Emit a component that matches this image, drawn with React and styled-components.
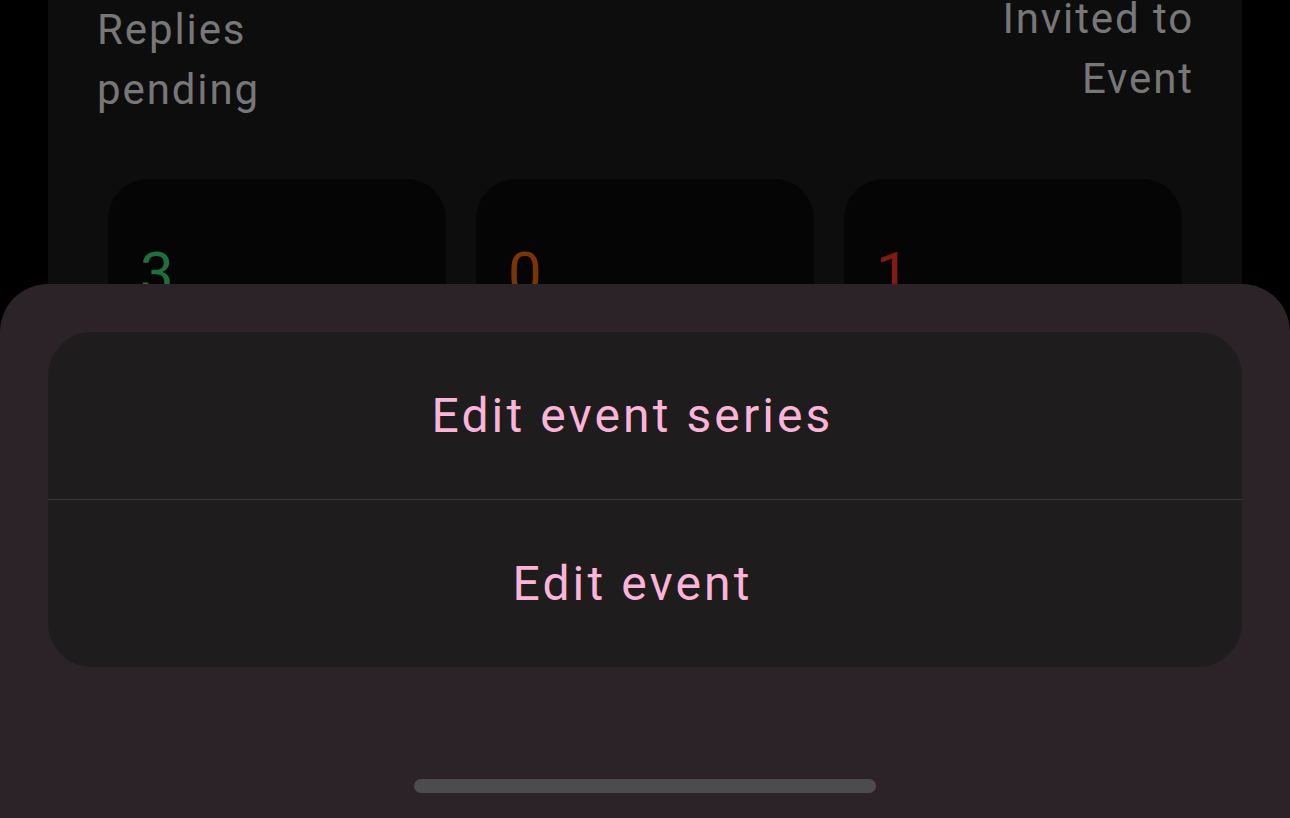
import React from 'react';
import styled, { createGlobalStyle } from 'styled-components';

// Global page reset
const GlobalStyle = createGlobalStyle`
  html, body {
    margin: 0;
    padding: 0;
    background: #000000;
    overflow: hidden;
  }
  body {
    font-family: Roboto, "Noto Sans", "Liberation Sans", sans-serif;
    -webkit-font-smoothing: antialiased;
  }
`;

const Screen = styled.div`
  position: relative;
  width: 1290px;
  height: 818px;
  overflow: hidden;
  background: #000000;
`;

const Panel = styled.section`
  margin: 0 48px;
  height: 818px;
  background: #0e0d0e;
  display: flex;
  flex-direction: column;
`;

const LabelRow = styled.div`
  display: flex;
  justify-content: space-between;
  align-items: flex-start;
  padding: 0 48px 0 49px;
`;

const StatLabel = styled.div`
  margin-top: ${p => p.shift || 0}px;
  font-size: 42px;
  line-height: 60px;
  letter-spacing: 1.9px;
  color: #787778;
  text-align: ${p => p.align || 'left'};
`;

const CardRow = styled.div`
  display: grid;
  grid-template-columns: repeat(3, 338px);
  gap: 30px;
  padding: 0 60px;
  margin-top: 59px;
`;

const Card = styled.div`
  height: 300px;
  border-radius: 40px;
  background: #050505;
  padding: 65px 32px 0;
  box-sizing: border-box;
`;

const Count = styled.div`
  font-size: 60px;
  line-height: 1;
  color: ${p => p.color};
`;

// Bottom sheet overlay
const Sheet = styled.div`
  position: absolute;
  left: 0;
  right: 0;
  bottom: 0;
  height: 534px;
  background: #2c2329;
  border-radius: 48px 48px 0 0;
  display: flex;
  flex-direction: column;
  padding: 48px 48px 0;
  box-sizing: border-box;
`;

const OptionGroup = styled.div`
  background: #1f1c1d;
  border-radius: 44px;
  overflow: hidden;
`;

const Option = styled.button`
  display: flex;
  align-items: center;
  justify-content: center;
  width: 100%;
  height: ${p => (p.last ? 168 : 167)}px;
  border: none;
  border-top: ${p => (p.last ? '1px solid #3a3538' : 'none')};
  background: transparent;
  font-family: Roboto, "Noto Sans", "Liberation Sans", sans-serif;
  font-size: 48px;
  letter-spacing: 3.1px;
  color: #fbb4d9;
  cursor: pointer;
  padding: 0 25px 0 0;
`;

const HomeBar = styled.div`
  margin: auto auto 25px;
  width: 462px;
  height: 14px;
  border-radius: 7px;
  background: #4c4c4c;
`;

const stats = [
  { id: 'yes', count: '3', color: '#1f6e3d' },
  { id: 'maybe', count: '0', color: '#7a3503' },
  { id: 'no', count: '1', color: '#821a14' },
];

const App = () => (
  <>
    <GlobalStyle />
    <Screen>
      <Panel>
        <LabelRow>
          <StatLabel>Replies<br />pending</StatLabel>
          <StatLabel align="right" shift={-11}>Invited to<br />Event</StatLabel>
        </LabelRow>
        <CardRow>
          {stats.map(each => (
            <Card key={each.id}>
              <Count color={each.color}>{each.count}</Count>
            </Card>
          ))}
        </CardRow>
      </Panel>

      <Sheet>
        <OptionGroup>
          <Option>Edit event series</Option>
          <Option last>Edit event</Option>
        </OptionGroup>
        <HomeBar />
      </Sheet>
    </Screen>
  </>
);

export default App;
